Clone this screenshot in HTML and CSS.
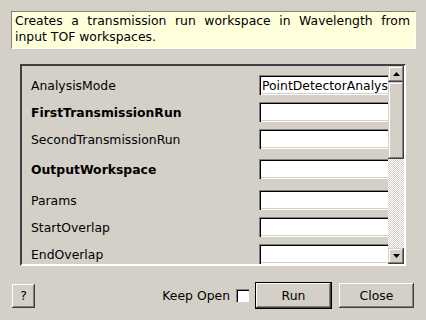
FILE: index.html
```html
<!DOCTYPE html>
<html lang="en">
<head>
  <meta charset="UTF-8" />
  <title>CreateTransmissionWorkspace input dialog</title>
  <link rel="stylesheet" href="styles.css">
</head>
<body>
  <div class="dialog">
    <p class="description">Creates a transmission run workspace in Wavelength from input TOF workspaces.</p>

    <div class="scroll-area">
      <div class="properties">
        <div class="prop">
          <label>AnalysisMode</label>
          <div class="field combo">PointDetectorAnalysis</div>
        </div>
        <div class="prop">
          <label class="required">FirstTransmissionRun</label>
          <div class="field"></div>
        </div>
        <div class="prop">
          <label>SecondTransmissionRun</label>
          <div class="field"></div>
        </div>
        <div class="prop gap-sm">
          <label class="required">OutputWorkspace</label>
          <div class="field"></div>
        </div>
        <div class="prop gap-md">
          <label>Params</label>
          <div class="field"></div>
        </div>
        <div class="prop">
          <label>StartOverlap</label>
          <div class="field"></div>
        </div>
        <div class="prop">
          <label>EndOverlap</label>
          <div class="field"></div>
        </div>
      </div>

      <div class="scrollbar">
        <div class="sb-btn">
          <svg width="7" height="4" viewBox="0 0 7 4"><path d="M3.5 0 L7 4 L0 4 Z" fill="#000"/></svg>
        </div>
        <div class="sb-thumb"></div>
        <div class="sb-track"></div>
        <div class="sb-btn">
          <svg width="7" height="4" viewBox="0 0 7 4"><path d="M0 0 L7 0 L3.5 4 Z" fill="#000"/></svg>
        </div>
      </div>
    </div>

    <div class="actions">
      <button class="btn help">?</button>
      <span class="spacer"></span>
      <label class="keep-open">Keep Open <span class="check"></span></label>
      <button class="btn default">Run</button>
      <button class="btn">Close</button>
    </div>
  </div>
</body>
</html>
```

FILE: styles.css
```css
body {
  margin: 0;
  font-family: 'DejaVu Sans', sans-serif;
  font-size: 12.4px;
  background-color: #d4d0c8;
  color: #000;
}

.dialog {
  width: 426px;
  height: 320px;
  display: flex;
  flex-direction: column;
}

.description {
  margin: 11px 10px 0 11px;
  height: 34px;
  padding: 1px 5px 1px 3px;
  line-height: 16px;
  text-align: justify;
  background-color: #ffffdc;
  border: 1px solid;
  border-color: #808080 #ffffff #ffffff #808080;
}

.scroll-area {
  margin: 15px 20px 0 20px;
  height: 198px;
  display: flex;
  border: 2px solid;
  border-color: #404040 #ffffff #ffffff #404040;
}

.properties {
  flex: 1;
  display: flex;
  flex-direction: column;
  overflow: hidden;
  padding: 9px 0 0 9px;
}

.prop {
  display: flex;
  align-items: center;
  flex-shrink: 0;
  height: 20px;
  margin-bottom: 7px;
}

.prop.gap-sm {
  margin-top: 3px;
}

.prop.gap-md {
  margin-top: 4px;
}

.prop label {
  width: 228px;
  flex-shrink: 0;
  white-space: nowrap;
}

.prop label.required {
  font-weight: bold;
}

.field {
  width: 150px;
  height: 20px;
  flex-shrink: 0;
  box-sizing: border-box;
  background-color: #fff;
  box-shadow: inset 1px 1px #808080, inset 2px 2px #000, inset -1px -1px #fff, inset -2px -2px #d4d0c8;
}

.combo {
  padding: 2px 0 0 3px;
  line-height: 17px;
  white-space: nowrap;
  overflow: hidden;
}

.scrollbar {
  width: 16px;
  display: flex;
  flex-direction: column;
}

.sb-btn,
.sb-thumb {
  background-color: #d4d0c8;
  box-shadow: inset -1px -1px #404040, inset 1px 1px #d4d0c8, inset -2px -2px #808080, inset 2px 2px #fff;
}

.sb-btn {
  height: 16px;
  display: flex;
  align-items: center;
  justify-content: center;
}

.sb-thumb {
  height: 77px;
}

.sb-track {
  flex: 1;
  background: repeating-conic-gradient(#fff 0 25%, #d4d0c8 0 50%) 0 0 / 2px 2px;
}

.actions {
  display: flex;
  align-items: center;
  height: 27px;
  margin: 16px 12px 0 12px;
}

.spacer {
  flex: 1;
}

.btn {
  font-family: inherit;
  font-size: inherit;
  color: #000;
  background-color: #d4d0c8;
  border: none;
  width: 75px;
  height: 25px;
  padding: 0;
  box-shadow: inset -1px -1px #404040, inset 1px 1px #fff, inset -2px -2px #808080;
}

.btn.help {
  width: 23px;
  height: 24px;
}

.btn.default {
  width: 77px;
  height: 27px;
  margin-right: 7px;
  border: 1px solid #000;
}

.keep-open {
  display: flex;
  align-items: center;
  margin-right: 6px;
}

.check {
  width: 13px;
  height: 13px;
  margin-left: 6px;
  box-sizing: border-box;
  background-color: #fff;
  box-shadow: inset 1px 1px #808080, inset 2px 2px #000, inset -1px -1px #fff;
}
```
